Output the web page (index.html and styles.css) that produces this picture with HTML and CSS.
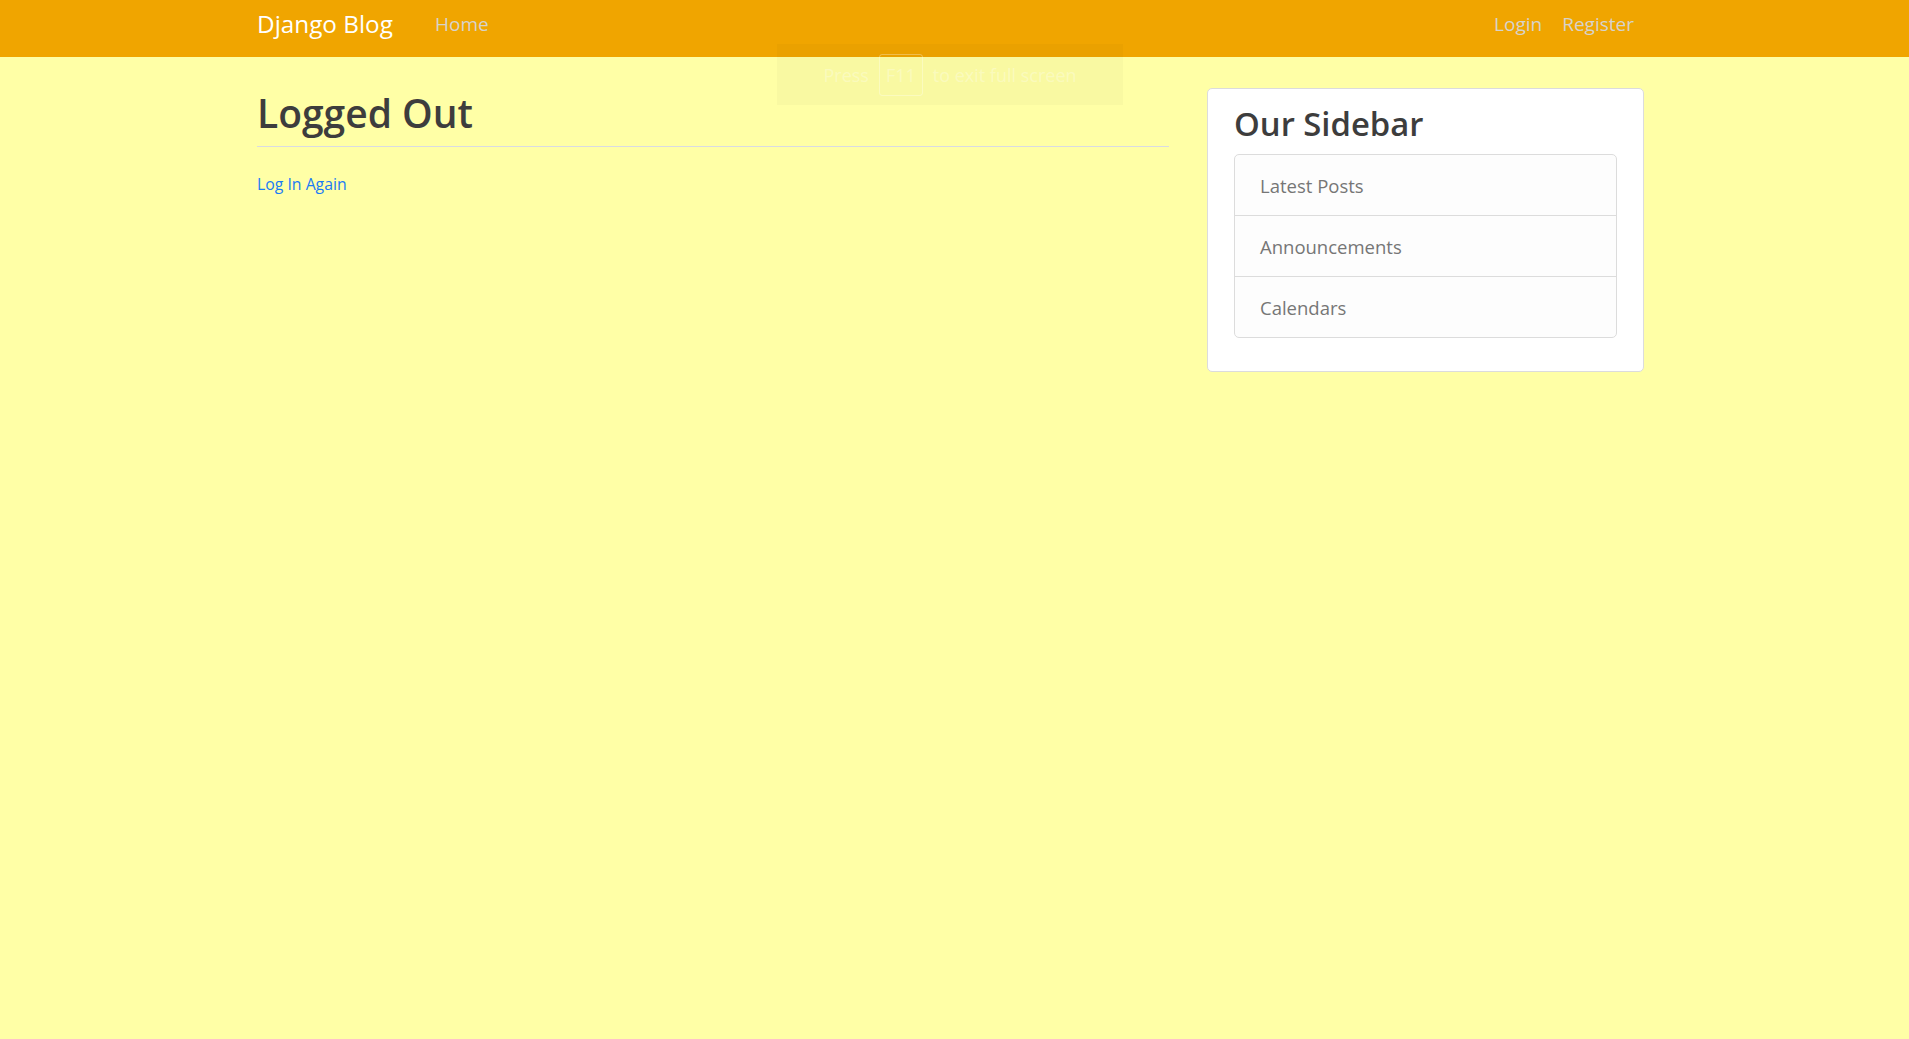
FILE: index.html
```html
<!DOCTYPE html>
<html lang="en">
<head>
<meta charset="utf-8">
<title>Django Blog</title>
<link rel="stylesheet" href="styles.css">
</head>
<body>
<nav class="navbar">
  <div class="container nav-inner">
    <a class="brand" href="#">Django Blog</a>
    <div class="nav-left">
      <a class="nav-link" href="#">Home</a>
    </div>
    <div class="nav-right">
      <a class="nav-link" href="#">Login</a>
      <a class="nav-link" href="#">Register</a>
    </div>
  </div>
</nav>

<div class="fs-toast">
  <span>Press</span><span class="fs-key">F11</span><span>to exit full screen</span>
</div>

<main class="container layout">
  <section class="content">
    <h1 class="page-title">Logged Out</h1>
    <hr class="rule">
    <a class="small-link" href="#">Log In Again</a>
  </section>
  <aside class="sidebar">
    <div class="card">
      <h3 class="card-title">Our Sidebar</h3>
      <ul class="list-group">
        <li class="list-item">Latest Posts</li>
        <li class="list-item">Announcements</li>
        <li class="list-item">Calendars</li>
      </ul>
    </div>
  </aside>
</main>
</body>
</html>
```

FILE: styles.css
```css
* { box-sizing: border-box; }

html, body {
  margin: 0;
  padding: 0;
}

body {
  background: #ffffa6;
  font-family: "Open Sans", "Noto Sans", "Liberation Sans", sans-serif;
  color: #3d3d3d;
  min-height: 1039px;
}

a { text-decoration: none; }

.container {
  box-sizing: content-box;
  width: 1387px;
  margin: 0 auto;
  padding-right: 8px;
}

.navbar {
  background: #f0a500;
  height: 57px;
}

.nav-inner {
  display: flex;
  align-items: center;
  height: 57px;
}

.brand {
  color: #ffffff;
  font-size: 24.3px;
  line-height: 1;
  margin-top: -8px;
  margin-right: 42px;
}

.nav-left, .nav-right {
  display: flex;
  align-items: center;
  margin-top: -8px;
}

.nav-right {
  margin-left: auto;
  gap: 20px;
  padding-right: 10px;
}

.nav-link {
  color: #d6d3cc;
  font-size: 19px;
  line-height: 1;
}

.layout {
  display: grid;
  grid-template-columns: 912px 437px;
  column-gap: 38px;
  align-items: start;
}

.content {
  padding-top: 32px;
}

.page-title {
  margin: 0;
  font-size: 39px;
  font-weight: 600;
  line-height: 48px;
  color: #3d3d3d;
}

.rule {
  border: 0;
  border-top: 1px solid #d9dbe3;
  margin: 9px 0 0 0;
  height: 0;
}

.small-link {
  display: inline-block;
  margin-top: 27px;
  font-size: 15.8px;
  line-height: 20px;
  color: #1a7cf5;
}

.sidebar {
  padding-top: 31px;
}

.card {
  background: #ffffff;
  border: 1px solid #dcdcdc;
  border-radius: 5px;
  padding: 15px 26px 33px 26px;
}

.card-title {
  margin: 0 0 10px 0;
  font-size: 32.8px;
  font-weight: 600;
  line-height: 40px;
  color: #3d3d3d;
}

.list-group {
  list-style: none;
  margin: 0;
  padding: 0;
  border: 1px solid #dcdcdc;
  border-radius: 5px;
  background: #fdfdfd;
}

.list-item {
  height: 61px;
  display: flex;
  align-items: center;
  padding: 0 25px;
  font-size: 18.5px;
  color: #767676;
  border-top: 1px solid #dcdcdc;
}

.list-item:first-child {
  border-top: 0;
  height: 60px;
}

.fs-toast {
  position: absolute;
  left: 777px;
  top: 44px;
  width: 346px;
  height: 61px;
  background: rgba(0, 0, 0, 0.025);
  display: flex;
  align-items: center;
  justify-content: center;
  gap: 10px;
  font-size: 18px;
  color: rgba(255, 255, 255, 0.3);
}

.fs-key {
  border: 1px solid rgba(255, 255, 255, 0.3);
  border-radius: 3px;
  padding: 8px 6px;
}
```
